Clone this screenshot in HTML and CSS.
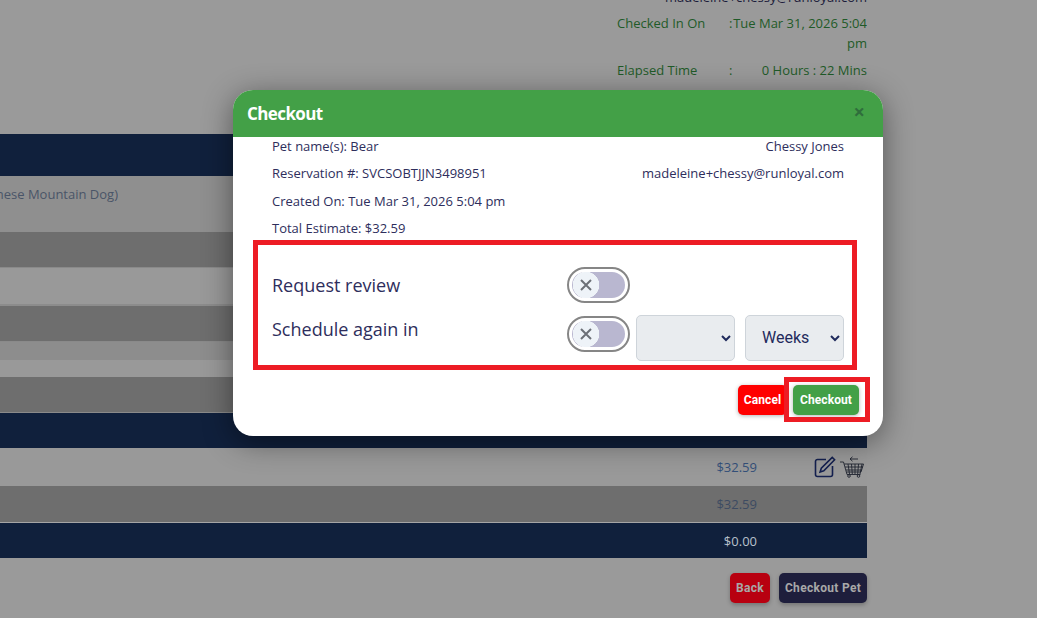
FILE: index.html
```html
<!DOCTYPE html>
<html lang="en">
<head>
    <meta charset="UTF-8">
    <meta name="viewport" content="width=device-width, initial-scale=1.0">
    <title>Checkout</title>
    <link rel="stylesheet" href="styles.css">
</head>
<body>
    <!-- Page behind the dialog, already dimmed -->
    <div class="page">
        <div class="info">
            <div class="info-email">madeleine+chessy@runloyal.com</div>
            <div class="info-row">
                <span class="info-label">Checked In On</span>
                <span class="info-colon">:</span>
                <span class="info-value">Tue Mar 31, 2026 5:04 pm</span>
            </div>
            <div class="info-row">
                <span class="info-label">Elapsed Time</span>
                <span class="info-colon">:</span>
                <span class="info-value">0 Hours : 22 Mins</span>
            </div>
        </div>

        <div class="sheet">
            <div class="band band-head"></div>
            <div class="band band-pet">
                <div class="pet-name"><span>Bear (Bernese Mountain Dog)</span></div>
            </div>
            <div class="band band-dark"></div>
            <div class="band band-light band-line"></div>
            <div class="band band-dark"></div>
            <div class="band band-mid"></div>
            <div class="band band-thin"></div>
            <div class="band band-dark"></div>
            <div class="band band-head band-total"></div>
            <div class="band band-light band-item">
                <span class="price">$32.59</span>
                <span class="actions">
                    <svg class="icon-edit" width="22" height="22" viewBox="0 0 22 22" fill="none" stroke="#14204f" stroke-width="1.6">
                        <path d="M12 3.5H3.500a2 2 0 0 0-2 2V18.500a2 2 0 0 0 2 2H16.500a2 2 0 0 0 2-2V10"/>
                        <path d="M18.200 1.400l2.400 2.400-10.800 11-3.700 1.200 1.200-3.700z"/>
                    </svg>
                    <svg class="icon-basket" width="24" height="22" viewBox="0 0 24 22" fill="none" stroke="#1f2430" stroke-width=".9">
                        <path d="M0 6h3.500l3.500 12.500h13.500"/>
                        <path d="M4.200 8H23.500l-2.500 8H6.500"/>
                        <path d="M8 8l1.500 10M11.500 8l.8 10M15 8v10M18.500 8l-.8 10M22 8l-2 10M5 11h18M6 14h16"/>
                        <circle cx="9" cy="20" r="1.300"/>
                        <circle cx="18.500" cy="20" r="1.300"/>
                        <path d="M18 3h-8M12.500 .8L10 3l2.500 2.200"/>
                    </svg>
                </span>
            </div>
            <div class="band band-dark band-item band-line">
                <span class="price price-dim">$32.59</span>
            </div>
            <div class="band band-head band-item">
                <span class="price price-light">$0.00</span>
            </div>
        </div>

        <div class="page-actions">
            <button class="page-btn page-btn-back">Back</button>
            <button class="page-btn page-btn-pet">Checkout Pet</button>
        </div>
    </div>

    <div class="modal">
        <div class="modal-head">
            <h2>Checkout</h2>
            <span class="modal-close">&times;</span>
        </div>
        <div class="modal-body">
            <div class="line line-split"><span>Pet name(s): Bear</span><span>Chessy Jones</span></div>
            <div class="line line-split"><span>Reservation #: SVCSOBTJJN3498951</span><span>madeleine+chessy@runloyal.com</span></div>
            <div class="line">Created On: Tue Mar 31, 2026 5:04 pm</div>
            <div class="line">Total Estimate: $32.59</div>

            <div class="options">
                <div class="option">
                    <label class="option-label option-label-mid">Request review</label>
                    <span class="toggle">
                        <span class="knob">
                            <svg width="12" height="12" viewBox="0 0 12 12" stroke="#6c7077" stroke-width="2"><path d="M1 1l10 10M11 1L1 11"/></svg>
                        </span>
                    </span>
                </div>
                <div class="option">
                    <label class="option-label">Schedule again in</label>
                    <span class="toggle toggle-low">
                        <span class="knob">
                            <svg width="12" height="12" viewBox="0 0 12 12" stroke="#6c7077" stroke-width="2"><path d="M1 1l10 10M11 1L1 11"/></svg>
                        </span>
                    </span>
                    <select class="pick"><option></option></select>
                    <select class="pick"><option>Weeks</option></select>
                </div>
            </div>

            <div class="modal-foot">
                <button class="btn btn-cancel">Cancel</button>
                <span class="marked"><button class="btn btn-checkout">Checkout</button></span>
            </div>
        </div>
    </div>
</body>
</html>
```

FILE: styles.css
```css
html, body {
    height: 100%;
}
body {
    margin: 0;
    background-color: #9a9a9a;
    font-family: "Open Sans", sans-serif;
    overflow: hidden;
}
.page {
    width: 867px;
}

/* top right details */
.info {
    width: 250px;
    height: 134px;
    margin-left: auto;
    color: #1f5a28;
    font-size: 13px;
    font-weight: 500;
    line-height: 20px;
    overflow: hidden;
}
.info-email {
    margin-top: -13px;
    margin-bottom: 6px;
    text-align: right;
    color: #1c1c3a;
}
.info-row {
    display: flex;
    margin-bottom: 7px;
}
.info-label {
    width: 112px;
    flex: none;
}
.info-colon {
    flex: none;
}
.info-value {
    flex: 1;
    text-align: right;
}

/* table stripes */
.band {
    height: 35px;
    display: flex;
    align-items: center;
    font-size: 13px;
}
.band-head {
    height: 42px;
    background-color: #10203c;
}
.band-total {
    height: 35px;
}
.band-pet {
    height: 56px;
    align-items: flex-start;
    background-color: #8f8f8f;
    color: #4a5568;
}
.band-dark {
    height: 35px;
    background-color: #6e6e6e;
    border-bottom: 1px solid #8a8a8a;
}
.band-light {
    height: 36px;
    background-color: #999999;
    border-bottom: 2px solid #8c8c8c;
}
.band-mid {
    height: 18px;
    background-color: #8d8d8d;
}
.band-thin {
    height: 17px;
    background-color: #999999;
}
.band-item {
    position: relative;
    height: 38px;
    border-bottom: 0;
}
.band-dark.band-item {
    height: 36px;
    padding-bottom: 1px;
    box-sizing: content-box;
    height: 35px;
    border-bottom: 1px solid #a5a5a5;
}
.band-head.band-item {
    height: 35px;
}
.pet-name {
    width: 118px;
    margin-top: 9px;
    display: flex;
    justify-content: flex-end;
    white-space: nowrap;
    overflow: hidden;
    line-height: 18px;
}
.price {
    width: 757px;
    text-align: right;
    font-size: 13px;
    color: #34507a;
}
.price-dim {
    color: #3d4b62;
}
.price-light {
    color: #b8c0cc;
}
.actions {
    display: flex;
    align-items: center;
    gap: 4px;
    margin-left: 57px;
}
.page-actions {
    display: flex;
    justify-content: flex-end;
    gap: 9px;
    margin-top: 15px;
}
.page-btn {
    height: 30px;
    padding: 0;
    border: 0;
    border-radius: 5px;
    color: #a8a8a8;
    font-family: Roboto, sans-serif;
    font-size: 12px;
    font-weight: 700;
    letter-spacing: .3px;
    box-shadow: 0 2px 4px rgba(0, 0, 0, .25);
}
.page-btn-back {
    width: 40px;
    background-color: #b80010;
}
.page-btn-pet {
    width: 88px;
    background-color: #1e1e3c;
}

/* dialog */
.modal {
    position: absolute;
    top: 90px;
    left: 233px;
    width: 650px;
    background-color: #fff;
    border-radius: 20px;
    box-shadow: 0 6px 30px rgba(0, 0, 0, .45);
    overflow: hidden;
}
.modal-head {
    height: 47px;
    padding: 0 18px 0 14px;
    display: flex;
    justify-content: space-between;
    align-items: center;
    background-color: #43a047;
}
.modal-head h2 {
    margin: -1px 0 0;
    color: #fff;
    font-size: 17px;
    font-weight: 700;
    letter-spacing: -.6px;
}
.modal-close {
    margin-top: -3px;
    color: #2f6e3c;
    font-size: 20px;
    font-weight: 700;
    line-height: 1;
}
.modal-body {
    padding: 0 39px 21px;
    color: #2e2e5c;
}
.line {
    height: 18px;
    margin-bottom: 9.300px;
    font-size: 13px;
    font-weight: 500;
    line-height: 18px;
}
.line-split {
    display: flex;
    justify-content: space-between;
}
.options {
    height: 130px;
    box-sizing: border-box;
    margin: -6.200px -13px 0 -19px;
    padding: 22px 8px 0 14px;
    border: 5px solid #ed1c24;
}
.option {
    display: flex;
    align-items: flex-start;
    margin-bottom: 12px;
}
.option-label {
    width: 295px;
    flex: none;
    margin-top: 2px;
    font-size: 18px;
    font-weight: 500;
    line-height: 24px;
}
.option-label-mid {
    margin-top: 6px;
}
.toggle {
    width: 63px;
    height: 36px;
    flex: none;
    box-sizing: border-box;
    padding: 3px;
    border: 2px solid #868686;
    border-radius: 18px;
    background-color: #fff;
}
.toggle-low {
    margin-top: 1px;
    margin-right: 6px;
}
.knob {
    display: flex;
    align-items: center;
    width: 53px;
    height: 26px;
    box-sizing: border-box;
    padding-left: 8px;
    border-radius: 13px;
    background: radial-gradient(circle at 14px 13px, #eef3f8 13px, #b9b7d0 13.500px);
}
.pick {
    width: 99px;
    height: 46px;
    flex: none;
    padding: 0 12px 1px;
    border: 1px solid #ced4da;
    border-radius: 5px;
    background-color: #e9ecef;
    color: #1f2a5c;
    font-family: Roboto, sans-serif;
    font-size: 16px;
}
.pick + .pick {
    margin-left: 10px;
}
.modal-foot {
    display: flex;
    justify-content: flex-end;
    gap: 6px;
    margin: 15px -15px 0 0;
}
.btn {
    height: 30px;
    border: 0;
    border-radius: 5px;
    padding: 0;
    color: #fff;
    font-family: Roboto, sans-serif;
    font-size: 12px;
    font-weight: 700;
    letter-spacing: .1px;
    box-shadow: 0 1px 4px rgba(0, 0, 0, .3);
}
.btn-cancel {
    width: 49px;
    background-color: #ff0000;
}
.btn-checkout {
    display: block;
    width: 66px;
    background-color: #43a047;
}
.marked {
    position: relative;
}
.marked::after {
    content: "";
    position: absolute;
    inset: -8px -11px -7px -9px;
    border: 5px solid #ed1c24;
}
```
